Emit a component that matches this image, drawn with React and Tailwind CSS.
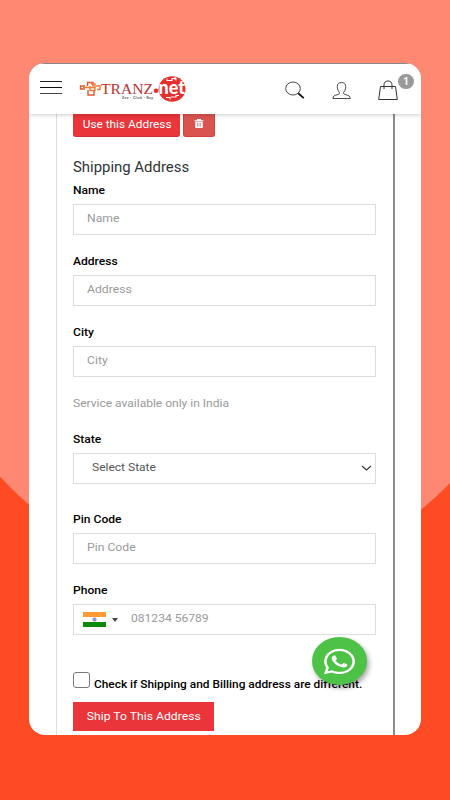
import React from 'react';
import { FaWhatsapp } from 'react-icons/fa';

function Label({ children }) {
  return (
    <div className="h-[19px] text-[11.5px] leading-[10px] font-medium text-black">
      <span className="inline-block origin-left scale-x-[1.05]">{children}</span>
    </div>
  );
}

function Field({ label, placeholder }) {
  return (
    <div className="mb-[21px]">
      <Label>{label}</Label>
      <div className="h-[31px] border border-[#dcdcdc] px-[13px] text-[11.5px] leading-[27px] text-[#999]">
        <span className="inline-block origin-left scale-x-[1.06]">{placeholder}</span>
      </div>
    </div>
  );
}

function Logo() {
  return (
    <svg className="ml-[17px]" width="108" height="28" viewBox="0 0 108 28">
      <g fill="none" strokeWidth="1.4">
        <path d="M6 11H1.500v3H6M8.500 11V7.500H14v4M9 15v5h6v-4" stroke="#e2572b" />
        <path d="M4 12.500h12M12 9h4v3M11 11v4.500h5V12M17 11h4v3.500h-3" stroke="#ed7a35" />
      </g>
      <ellipse cx="93" cy="14" rx="13.500" ry="12.800" fill="#e4312d" />
      <circle cx="77" cy="15.800" r="2.300" fill="#e4312d" />
      <g fill="none" stroke="#fff" strokeWidth="1.1">
        <path d="M88 3.500v2h5v-2h4v2M96 2v3M87 22.500h4v2M92 22h5v-1.500h3" />
      </g>
      <text x="22" y="19" fontFamily="Liberation Serif, serif" fontSize="15" fill="#b93430" textLength="52" lengthAdjust="spacingAndGlyphs">TRANZ</text>
      <text x="79.500" y="19" fontFamily="Lato, sans-serif" fontWeight="900" fontSize="18" fill="#fff" textLength="26.500" lengthAdjust="spacingAndGlyphs">net</text>
      <text x="43" y="23.800" fontFamily="Roboto, sans-serif" fontWeight="700" fontSize="3.400" fill="#666" textLength="31">See • Click • Buy</text>
    </svg>
  );
}

function Header() {
  return (
    <header className="relative z-10 flex h-[51px] shrink-0 items-start border-t border-[#888] bg-white pl-[11px] pt-[11px] shadow-[0_1px_4px_rgba(0,0,0,0.2)]">
      <div className="mt-[6px] flex w-[22px] flex-col gap-[5px]">
        <span className="h-px bg-[#222]" />
        <span className="h-px bg-[#111]" />
        <span className="h-px bg-[#444]" />
      </div>
      <Logo />
      <svg className="ml-[98px] mt-[6px]" width="20" height="19" viewBox="0 0 20 19" fill="none" stroke="#333" strokeWidth="0.9">
        <ellipse cx="8" cy="7.500" rx="7.300" ry="6.500" />
        <path d="M13 12.500l1.500 1" />
        <path d="M13.500 12.500l5.300 4.700" stroke="#111" strokeWidth="1.800" />
      </svg>
      <svg className="ml-[27px] mt-[6px]" width="20" height="19" viewBox="0 0 20 19" fill="none" stroke="#333" strokeWidth="0.9">
        <path d="M7.500 11.500C5.500 9.500 5.300 7 5.300 5.500c0-2.700 1.700-4 4.200-4s4.200 1.300 4.200 4c0 1.500-.2 4-2.200 6 0 1.500.5 1.800 2.500 2.300 2.500.6 4.300 1.200 4.300 3.700H.9c0-2.500 1.600-3.100 4.100-3.700 2-.5 2.500-.8 2.500-2.300z" />
      </svg>
      <div className="relative ml-[25px] mt-[5px]">
        <svg width="22" height="21" viewBox="0 0 22 21" fill="none" stroke="#333">
          <path d="M3.500 6.500h15l1.800 13h-18.600z" />
          <path d="M7 9V5c0-2.500 1.500-4 4-4s4 1.500 4 4v4" />
        </svg>
        <span className="absolute -top-[6px] left-[21px] flex h-[15px] w-[16px] items-center justify-center rounded-full bg-[#999] text-[10px] font-bold text-white">
          1
        </span>
      </div>
    </header>
  );
}

function Flag() {
  return (
    <svg width="23" height="15" viewBox="0 0 22 15" preserveAspectRatio="none">
      <path fill="#fff" d="M0 0h22v15H0z" />
      <path fill="#ff9933" d="M0 0h22v5H0z" />
      <path fill="#0b8a0b" d="M0 10h22v5H0z" />
      <circle cx="11" cy="7.500" r="1.700" fill="#9b9bdf" stroke="#6666bb" strokeWidth="0.500" />
    </svg>
  );
}

export default function App() {
  return (
    <div className="relative h-[800px] w-[450px] overflow-hidden bg-[#ff4b24] pl-[29px] pt-[63px] font-['Roboto',sans-serif]">
      <div className="absolute left-0 top-0 h-[300px] w-full bg-[#ff8872]" />
      <div className="absolute -left-[79px] -top-[36px] size-[614px] rounded-full bg-[#ff8872]" />

      <div className="relative flex h-[672px] w-[392px] flex-col overflow-hidden rounded-2xl bg-white">
        <Header />
        <main className="ml-[27px] h-[621px] w-[339px] border-l border-r-2 border-l-[#ddd] border-r-[#8a8a8a] pl-[16.4px] pr-[17px]">
          <div className="flex gap-[3px]">
            <div className="h-[23px] w-[106.500px] rounded-b-[3px] border-b border-[#cf2d33] bg-[#ea353b] text-center text-[11.5px] leading-[20px] text-white">
              <span className="inline-block scale-x-[1.03]">Use this Address</span>
            </div>
            <div className="flex h-[23px] w-[32.500px] justify-center rounded-b-[3px] border border-t-0 border-[#d43f3a] bg-[#d9534f] pt-[5px]">
              <svg width="10" height="9" viewBox="0 0 10 10" preserveAspectRatio="none" fill="#fff">
                <path d="M3 0h4v1.300h2.500v1.200h-9V1.300H3zM1.200 3h7.600v6.200q0 .8-.8.8H2q-.8 0-.8-.8z" />
                <path d="M3.500 4.300v4.200M5 4.300v4.200M6.500 4.300v4.200" stroke="#d9534f" strokeWidth="0.600" />
              </svg>
            </div>
          </div>

          <h2 className="mt-[20px] h-[28px] text-[14px] leading-[21px] text-[#333]">
            <span className="inline-block origin-left scale-x-[1.065]">Shipping Address</span>
          </h2>
          <Field label="Name" placeholder="Name" />
          <Field label="Address" placeholder="Address" />
          <Field label="City" placeholder="City" />

          <p className="mb-[25px] text-[11.5px] leading-[11px] text-[#999]">
            <span className="inline-block origin-left scale-x-[1.045]">Service available only in India</span>
          </p>

          <Label>State</Label>
          <div className="mb-[30px] flex h-[31px] items-center justify-between border border-[#dcdcdc] pl-[17.5px] pr-[3px] text-[11.5px] text-[#555]">
            <span className="-mt-[2px] inline-block origin-left scale-x-[1.045]">Select State</span>
            <svg width="11" height="7" viewBox="0 0 11 7" fill="none" stroke="#333" strokeWidth="1.100">
              <path d="M1 1l4.500 4L10 1" />
            </svg>
          </div>

          <Field label="Pin Code" placeholder="Pin Code" />
          <Label>Phone</Label>
          <div className="flex h-[31px] items-center border border-[#dcdcdc] pl-[8.500px]">
            <Flag />
            <span className="ml-[6px] border-x-[3px] border-t-4 border-x-transparent border-t-[#444]" />
            <span className="-mt-[2px] ml-[13px] inline-block origin-left scale-x-[1.05] text-[11.5px] text-[#999]">081234 56789</span>
          </div>

          <div className="mt-[37px] flex h-[17px]">
            <span className="h-[16px] w-[17px] rounded-[3px] border border-[#777]" />
            <span className="ml-[3.500px] mt-[5px] inline-block origin-left scale-x-[1.033] text-[11.5px] leading-[14px] font-medium whitespace-nowrap text-black">
              Check if Shipping and Billing address are different.
            </span>
          </div>
          <div className="mt-[13px] h-[29px] w-[140.500px] bg-[#ea353b] text-center text-[11.5px] leading-[28px] text-white">
            <span className="inline-block scale-x-[1.06]">Ship To This Address</span>
          </div>
        </main>

        <div className="absolute left-[283px] top-[574px] flex h-[48px] w-[55px] items-center justify-center rounded-[50%] bg-[#4dc247] shadow-[2px_3px_5px_rgba(0,0,0,0.35)]">
          <FaWhatsapp preserveAspectRatio="none" className="h-[29px] w-[31px] text-white" />
        </div>
      </div>
    </div>
  );
}
